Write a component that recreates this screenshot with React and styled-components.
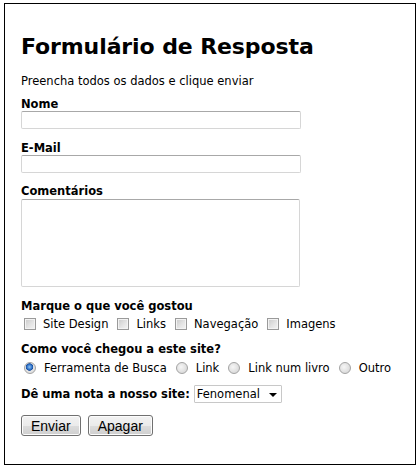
import React from 'react'
import styled, { createGlobalStyle } from 'styled-components'

const Global = createGlobalStyle`
  body {
    margin: 0;
    background: #fff;
    font-family: 'DejaVu Sans', Verdana, sans-serif;
    color: #000;
  }
`

const Box = styled.form`
  box-sizing: border-box;
  width: 412px;
  height: 462px;
  margin: 3px 0 0 4px;
  border: 1.5px solid #000;
  padding: 0 16px;
  display: flex;
  flex-direction: column;
`

const Title = styled.h1`
  margin: 30px 0 0;
  font-size: 22px;
  font-weight: bold;
  line-height: 26px;
  letter-spacing: -0.1px;
`

const Intro = styled.p`
  margin: 14px 0 0;
  font-size: 11.5px;
  line-height: 14px;
`

const Label = styled.label`
  display: block;
  margin-top: ${p => p.$top || 9}px;
  font-size: 11.5px;
  font-weight: bold;
  line-height: 14px;
`

const Text = styled.input`
  box-sizing: border-box;
  display: block;
  width: 280px;
  height: 18px;
  margin: 0;
  border: 1px solid #d6d6d6;
  border-top-color: #a8a8a8;
  border-radius: 2px;
  background: #fff;
  outline: none;
`

const Area = styled.textarea`
  box-sizing: border-box;
  display: block;
  width: 279px;
  height: 88px;
  margin: 1px 0 0;
  border: 1px solid #d6d6d6;
  border-top-color: #a8a8a8;
  border-radius: 2px;
  resize: none;
  outline: none;
`

const Options = styled.div`
  display: flex;
  align-items: center;
  margin-top: ${p => p.$top || 3}px;
  padding-left: 3px;
  height: 16px;
  font-size: 11.5px;
`

const Option = styled.label`
  display: flex;
  align-items: center;
  margin-right: 9px;
  white-space: nowrap;
`

const Check = styled.input.attrs({ type: 'checkbox' })`
  appearance: none;
  box-sizing: border-box;
  width: 12px;
  height: 12px;
  margin: 0 7px 0 0;
  border: 1px solid #9a9a9a;
  background: linear-gradient(135deg, #c9c9c9 0%, #e4e4e4 55%, #f4f4f4 100%);
  box-shadow: inset 0 0 0 1px #f3f3f3;
`

const Radio = styled.input.attrs({ type: 'radio' })`
  appearance: none;
  box-sizing: border-box;
  width: 12px;
  height: 12px;
  margin: 0 8px 0 0;
  border-radius: 50%;
  border: 1px solid #a3a3a3;
  background: radial-gradient(circle at 40% 40%, #f6f6f6 0%, #dcdcdc 70%);
  &:checked {
    background: radial-gradient(circle at 45% 40%, #8fc4f4 0%, #2c6fc6 32%, #1c4f9c 42%, #e6e6e6 50%, #d4d4d4 100%);
  }
`

const NoteRow = styled.div`
  display: flex;
  align-items: center;
  height: 18px;
  margin-top: 9px;
  font-size: 11.5px;
  font-weight: bold;
`

const SelectWrap = styled.span`
  position: relative;
  display: inline-block;
  margin-left: 4px;
  height: 18px;
  &::after {
    content: '';
    position: absolute;
    right: 5px;
    top: 8px;
    border-left: 4px solid transparent;
    border-right: 4px solid transparent;
    border-top: 4px solid #000;
    pointer-events: none;
  }
`

const Select = styled.select`
  appearance: none;
  box-sizing: border-box;
  display: block;
  width: 88px;
  height: 18px;
  padding: 0 0 0 2px;
  border: 1px solid #c8c8c8;
  border-radius: 1px;
  background: #fff;
  font-family: 'DejaVu Sans', Verdana, sans-serif;
  font-size: 11.5px;
  color: #000;
  outline: none;
`

const Buttons = styled.div`
  display: flex;
  gap: 7px;
  margin-top: 12px;
`

const Button = styled.button`
  box-sizing: border-box;
  height: 21px;
  padding: 0 9px;
  border: 1px solid #707070;
  border-radius: 3px;
  background: linear-gradient(#f2f2f2 0%, #ebebeb 50%, #dddddd 51%, #cfcfcf 100%);
  box-shadow: inset 0 0 0 1px #fcfcfc;
  font-family: 'Liberation Sans', Arial, sans-serif;
  font-size: 14px;
  color: #000;
`

export default function App() {
  return (
    <>
      <Global />
      <Box onSubmit={e => e.preventDefault()}>
        <Title>Formulário de Resposta</Title>
        <Intro>Preencha todos os dados e clique enviar</Intro>

        <Label $top={9}>Nome</Label>
        <Text type="text" />

        <Label $top={12}>E-Mail</Label>
        <Text type="text" />

        <Label $top={11}>Comentários</Label>
        <Area />

        <Label $top={12}>Marque o que você gostou</Label>
        <Options>
          <Option><Check />Site Design</Option>
          <Option><Check />Links</Option>
          <Option><Check />Navegação</Option>
          <Option><Check />Imagens</Option>
        </Options>

        <Label $top={10}>Como você chegou a este site?</Label>
        <Options $top={4}>
          <Option><Radio name="origem" defaultChecked />Ferramenta de Busca</Option>
          <Option><Radio name="origem" />Link</Option>
          <Option><Radio name="origem" />Link num livro</Option>
          <Option><Radio name="origem" />Outro</Option>
        </Options>

        <NoteRow>
          Dê uma nota a nosso site:
          <SelectWrap>
            <Select defaultValue="Fenomenal">
              <option>Fenomenal</option>
              <option>Bom</option>
              <option>Regular</option>
              <option>Ruim</option>
            </Select>
          </SelectWrap>
        </NoteRow>

        <Buttons>
          <Button type="submit">Enviar</Button>
          <Button type="reset">Apagar</Button>
        </Buttons>
      </Box>
    </>
  )
}
